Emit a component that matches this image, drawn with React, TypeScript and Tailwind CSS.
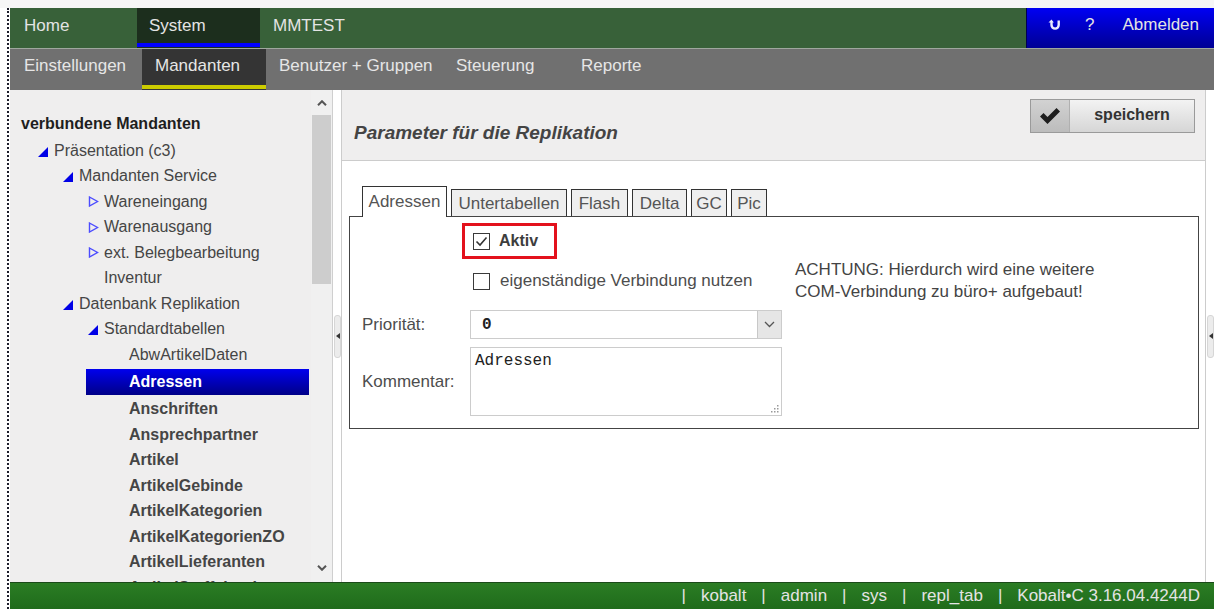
import React from "react";

type Node = {
  label: string;
  level: number;
  icon?: "open" | "closed";
  bold?: boolean;
  selected?: boolean;
};

const tree: Node[] = [
  { label: "Präsentation (c3)", level: 1, icon: "open" },
  { label: "Mandanten Service", level: 2, icon: "open" },
  { label: "Wareneingang", level: 3, icon: "closed" },
  { label: "Warenausgang", level: 3, icon: "closed" },
  { label: "ext. Belegbearbeitung", level: 3, icon: "closed" },
  { label: "Inventur", level: 3 },
  { label: "Datenbank Replikation", level: 2, icon: "open" },
  { label: "Standardtabellen", level: 3, icon: "open" },
  { label: "AbwArtikelDaten", level: 4 },
  { label: "Adressen", level: 4, bold: true, selected: true },
  { label: "Anschriften", level: 4, bold: true },
  { label: "Ansprechpartner", level: 4, bold: true },
  { label: "Artikel", level: 4, bold: true },
  { label: "ArtikelGebinde", level: 4, bold: true },
  { label: "ArtikelKategorien", level: 4, bold: true },
  { label: "ArtikelKategorienZO", level: 4, bold: true },
  { label: "ArtikelLieferanten", level: 4, bold: true },
  { label: "ArtikelStaffelpreise", level: 4, bold: true },
];

const tabs = [
  { label: "Adressen", w: "w-[85px]", active: true },
  { label: "Untertabellen", w: "w-[116px]" },
  { label: "Flash", w: "w-[57px]" },
  { label: "Delta", w: "w-[55px]" },
  { label: "GC", w: "w-[36px]" },
  { label: "Pic", w: "w-[36px]" },
];

function TreeIcon({ kind }: { kind?: "open" | "closed" }) {
  if (kind === "open")
    return (
      <svg width="10" height="10" viewBox="0 0 10 10" className="mt-[2px]">
        <polygon points="10,0 10,10 0,10" fill="#0000e6" />
      </svg>
    );
  if (kind === "closed")
    return (
      <svg width="11" height="11" viewBox="0 0 11 11">
        <polygon points="1.5,1 9.5,5.5 1.5,10" fill="none" stroke="#4b4bff" strokeWidth="1.4" />
      </svg>
    );
  return null;
}

function CheckBox({ checked }: { checked?: boolean }) {
  return (
    <span className="flex h-[17px] w-[17px] items-center justify-center border border-[#3a3a3a] bg-white">
      {checked && (
        <svg width="13" height="11" viewBox="0 0 13 11">
          <polyline points="1.5,5.5 5,9 11.5,1.5" fill="none" stroke="#333" strokeWidth="1.6" />
        </svg>
      )}
    </span>
  );
}

function Handle() {
  return (
    <div className="flex h-[43px] w-[7px] items-center justify-center rounded-[3px] border border-[#d6d6d6] bg-[#ececec]">
      <svg width="4" height="6" viewBox="0 0 4 6">
        <polygon points="4,0 4,6 0,3" fill="#333" />
      </svg>
    </div>
  );
}

export default function App() {
  return (
    <div className="flex h-[609px] w-[1214px] flex-col overflow-hidden bg-white font-['Liberation_Sans',Arial,sans-serif]">
      <div className="h-[8px] bg-[#f6f6f6]" />
      <div className="flex min-h-0 flex-1">
        {/* left frame edge */}
        <div className="w-[10px] pr-[1px]">
          <div className="h-full w-[9px] border-r-2 border-dotted border-[#1d1d2b]" />
        </div>

        <div className="flex min-w-0 flex-1 flex-col">
          {/* main menu */}
          <div className="flex h-[41px] border-b border-[#9fa79f] bg-[#386139] text-[17px] text-[#e4e4e4]">
            <div className="flex w-[127px] flex-col">
              <div className="flex h-[35px] items-center pl-[14px]">Home</div>
            </div>
            <div className="flex w-[123px] flex-col bg-[#1c2e1d]">
              <div className="flex h-[35px] items-center pl-[12px]">System</div>
              <div className="h-[4px] bg-[#0000ff]" />
            </div>
            <div className="flex flex-col">
              <div className="flex h-[35px] items-center pl-[13px]">MMTEST</div>
            </div>
            <div className="ml-auto flex h-[40px] w-[188px] items-center border-l border-[#000050] bg-gradient-to-b from-[#0000f4] to-[#000094] pb-[6px]">
              <svg width="14" height="12" viewBox="0 0 14 12" className="ml-[21px]">
                <path d="M3.5 2.5 V6 A3.6 3.6 0 0 0 10.7 6 V1.5" fill="none" stroke="#e8e8ff" strokeWidth="2.4" />
                <polygon points="0.5,3.6 3.5,0.6 5.8,3.6" fill="#e8e8ff" />
              </svg>
              <span className="ml-[23px]">?</span>
              <span className="ml-[28px]">Abmelden</span>
            </div>
          </div>

          {/* sub menu */}
          <div className="flex h-[41px] bg-[#707070] text-[17px] text-[#e6e6e6]">
            <div className="flex w-[132px] flex-col">
              <div className="flex h-[33px] items-center pl-[14px]">Einstellungen</div>
            </div>
            <div className="flex w-[124px] flex-col bg-[#343434]">
              <div className="flex h-[33px] items-center pl-[13px]">Mandanten</div>
              <div className="mt-auto mb-[1px] h-[4px] bg-[#cccc00]" />
            </div>
            <div className="flex w-[177px] flex-col">
              <div className="flex h-[33px] items-center pl-[13px]">Benutzer + Gruppen</div>
            </div>
            <div className="flex w-[125px] flex-col">
              <div className="flex h-[33px] items-center pl-[13px]">Steuerung</div>
            </div>
            <div className="flex flex-col">
              <div className="flex h-[33px] items-center pl-[13px]">Reporte</div>
            </div>
          </div>

          {/* content */}
          <div className="flex min-h-0 flex-1">
            {/* tree */}
            <div className="flex w-[323px] border-r border-[#cfcfcf] bg-[#efeeee]">
              <div className="min-w-0 flex-1 overflow-hidden text-[16px] text-[#454545]">
                <div className="pt-[21px] pb-[2px] pl-[11px] leading-[25px] font-bold text-[#1e1e1e]">
                  verbundene Mandanten
                </div>
                {tree.map((n) =>
                  n.selected ? (
                    <div
                      key={n.label}
                      className="my-[1.4px] ml-[76px] flex h-[26px] w-[223px] items-center bg-gradient-to-b from-[#0000ee] to-[#000088] pl-[43px] font-bold text-white"
                    >
                      {n.label}
                    </div>
                  ) : (
                    <div
                      key={n.label}
                      className={`flex h-[25.5px] items-center whitespace-nowrap ${n.bold ? "font-bold" : ""}`}
                      style={{ paddingLeft: 28 + 25 * (n.level - 1) }}
                    >
                      <span className="flex w-[16px] shrink-0 items-center">
                        <TreeIcon kind={n.icon} />
                      </span>
                      {n.label}
                    </div>
                  )
                )}
              </div>
              {/* scrollbar */}
              <div className="flex w-[21px] flex-col bg-[#f0f0f0]">
                <div className="flex h-[25px] items-center justify-center">
                  <svg width="10" height="6" viewBox="0 0 10 6">
                    <polyline points="1,5.2 5,1.2 9,5.2" fill="none" stroke="#555" strokeWidth="2" />
                  </svg>
                </div>
                <div className="ml-[1px] h-[169px] w-[19px] bg-[#cdcdcd]" />
                <div className="mt-auto flex h-[26px] items-center justify-center pb-[2px]">
                  <svg width="10" height="6" viewBox="0 0 10 6">
                    <polyline points="1,0.8 5,4.8 9,0.8" fill="none" stroke="#555" strokeWidth="2" />
                  </svg>
                </div>
              </div>
            </div>

            {/* splitter */}
            <div className="flex w-[8px] items-center justify-end bg-white">
              <Handle />
            </div>

            {/* detail panel */}
            <div className="flex w-[865px] flex-col border-x border-[#cccccc]">
              <div className="flex h-[71px] items-start justify-between border-b border-[#cccccc] bg-[#efeeee] pr-[10px] pl-[12px]">
                <div className="pt-[31px] text-[19px] leading-[24px] font-bold text-[#444] italic">
                  Parameter für die Replikation
                </div>
                <div className="mt-[9px] flex h-[34px] w-[165px] border border-[#9a9a9a]">
                  <div className="flex w-[39px] items-center justify-center border-r border-[#b0b0b0] bg-gradient-to-b from-[#d2d2d2] to-[#bcbcbc]">
                    <svg width="22" height="18" viewBox="0 0 22 18">
                      <polygon points="1,9.5 4.5,6 8.5,10 17.5,1 21,4.5 8.5,17" fill="#1e1e1e" />
                    </svg>
                  </div>
                  <div className="flex flex-1 items-center justify-center bg-gradient-to-b from-[#f3f3f3] to-[#d6d6d6] pb-[3px] text-[16px] font-bold text-[#333]">
                    speichern
                  </div>
                </div>
              </div>

              <div className="flex-1 bg-white pt-[25px] pr-[6px] pl-[7px]">
                <div className="flex items-end gap-[4px] pl-[13px] text-[17px] text-[#555]">
                  {tabs.map((t) =>
                    t.active ? (
                      <div
                        key={t.label}
                        className={`relative z-10 -mb-px flex h-[31px] ${t.w} items-center justify-center border border-b-0 border-[#333] bg-white`}
                      >
                        {t.label}
                      </div>
                    ) : (
                      <div
                        key={t.label}
                        className={`flex h-[27px] ${t.w} items-center justify-center border border-b-0 border-[#333] bg-[#efefef] pt-[1px]`}
                      >
                        {t.label}
                      </div>
                    )
                  )}
                </div>

                <div className="border border-[#444] pt-[6px] pb-[12px] text-[17px] text-[#4d4d4d]">
                  <div className="ml-[112px] flex h-[36px] w-[95px] items-center gap-[9px] border-[3px] border-[#e3111c] pl-[8px]">
                    <CheckBox checked />
                    <span className="text-[16px] font-bold text-[#3d3d3d]">Aktiv</span>
                  </div>

                  <div className="flex">
                    <div className="w-[445px] pt-[11px] pl-[123px]">
                      <div className="flex h-[22px] items-center gap-[10px]">
                        <CheckBox />
                        <span>eigenständige Verbindung nutzen</span>
                      </div>
                    </div>
                    <div className="leading-[22px] text-[#444]">
                      ACHTUNG: Hierdurch wird eine weitere
                      <br />
                      COM-Verbindung zu büro+ aufgebaut!
                    </div>
                  </div>

                  <div className="mt-[7px] flex items-center">
                    <div className="w-[120px] pl-[12px]">Priorität:</div>
                    <div className="flex h-[29px] w-[312px] border border-[#cccccc] bg-white">
                      <div className="flex flex-1 items-center pl-[11px] font-['Liberation_Mono','Courier_New',monospace] text-[16px] font-bold text-[#222]">
                        0
                      </div>
                      <div className="flex w-[24px] items-center justify-center border-l border-[#c8c8c8] bg-[#e6e6e6]">
                        <svg width="11" height="7" viewBox="0 0 11 7">
                          <polyline points="1,1 5.5,5.5 10,1" fill="none" stroke="#555" strokeWidth="1.3" />
                        </svg>
                      </div>
                    </div>
                  </div>

                  <div className="mt-[8px] flex items-center">
                    <div className="w-[120px] pl-[12px]">Kommentar:</div>
                    <div className="relative h-[69px] w-[312px] border border-[#cccccc] bg-white pt-[3px] pl-[4px] font-['Liberation_Mono','Courier_New',monospace] text-[16px] leading-[20px] text-[#222]">
                      Adressen
                      <svg width="9" height="9" viewBox="0 0 9 9" className="absolute right-[2px] bottom-[2px]">
                        <rect x="7" y="1" width="1.5" height="1.5" fill="#999" />
                        <rect x="4" y="4" width="1.5" height="1.5" fill="#999" />
                        <rect x="7" y="4" width="1.5" height="1.5" fill="#999" />
                        <rect x="1" y="7" width="1.5" height="1.5" fill="#999" />
                        <rect x="4" y="7" width="1.5" height="1.5" fill="#999" />
                        <rect x="7" y="7" width="1.5" height="1.5" fill="#999" />
                      </svg>
                    </div>
                  </div>
                </div>
              </div>
            </div>

            {/* right splitter */}
            <div className="flex w-[8px] items-center justify-end bg-white">
              <Handle />
            </div>
          </div>

          {/* status bar */}
          <div className="flex h-[27px] items-center justify-end gap-[15px] border-t border-[#1b4a19] bg-gradient-to-b from-[#2b7d24] to-[#1f6b1b] pr-[14px] text-[17px] text-[#e4e4e4]">
            <span>|</span>
            <span>kobalt</span>
            <span>|</span>
            <span>admin</span>
            <span>|</span>
            <span>sys</span>
            <span>|</span>
            <span>repl_tab</span>
            <span>|</span>
            <span>Kobalt•C 3.16.04.4244D</span>
          </div>
        </div>
      </div>
    </div>
  );
}
